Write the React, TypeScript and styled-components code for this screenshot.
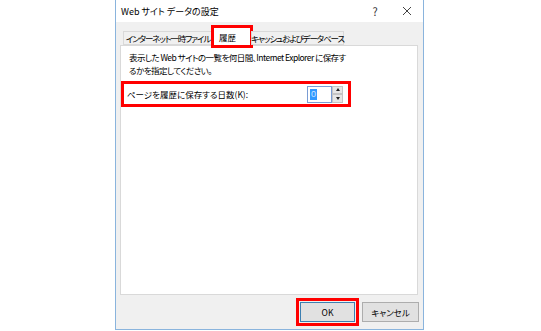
import React from "react";
import styled, { createGlobalStyle } from "styled-components";

const Global = createGlobalStyle`
  html, body { margin: 0; padding: 0; background: #ffffff; }
  body {
    font-family: "Noto Sans CJK JP", "Noto Sans", sans-serif;
    font-size: 9px;
    color: #000;
    font-feature-settings: "palt";
  }
`;

const Page = styled.div`
  width: 541px;
  height: 331px;
  display: flex;
  justify-content: flex-start;
  padding-left: 115px;
  box-sizing: border-box;
`;

const Dialog = styled.div`
  width: 309px;
  height: 330px;
  box-sizing: border-box;
  border: 1px solid #8ab4dd;
  border-top: none;
  background: #f0f0f0;
  display: flex;
  flex-direction: column;
`;

const TitleBar = styled.div`
  height: 22px;
  background: #ffffff;
  display: flex;
  align-items: center;
  padding-left: 5px;
  font-size: 9px;
`;

const TitleText = styled.div`
  flex: 1;
`;

const TitleButton = styled.div`
  width: 32px;
  text-align: center;
  font-size: 11px;
  color: #333;
  display: flex;
  align-items: center;
  justify-content: center;
`;

const Body = styled.div`
  flex: 1;
  display: flex;
  flex-direction: column;
  padding: 4px 4px 0 4px;
`;

const TabStrip = styled.div`
  display: flex;
  align-items: flex-end;
  height: 19px;
  padding-left: 3px;
  position: relative;
  z-index: 1;
`;

const Tab = styled.div<{ $active?: boolean; $w: number }>`
  width: ${(p) => p.$w}px;
  height: ${(p) => (p.$active ? 19 : 14)}px;
  box-sizing: border-box;
  border: 1px solid #d9d9d9;
  border-bottom: ${(p) => (p.$active ? "none" : "1px solid #d9d9d9")};
  background: ${(p) => (p.$active ? "#ffffff" : "#f0f0f0")};
  display: flex;
  align-items: center;
  justify-content: ${(p) => (p.$active ? "flex-start" : "center")};
  padding-left: ${(p) => (p.$active ? 5 : 0)}px;
  font-size: 8.5px;
  letter-spacing: ${(p) => (p.$active ? 0 : -1.1)}px;
  white-space: nowrap;
  outline: ${(p) => (p.$active ? "3px solid #ff0000" : "none")};
  outline-offset: ${(p) => (p.$active ? "-1px" : "0")};
  margin-bottom: ${(p) => (p.$active ? -1 : 0)}px;
`;

const Panel = styled.div`
  height: 250px;
  box-sizing: border-box;
  background: #ffffff;
  border: 1px solid #d9d9d9;
  padding: 5px 0 0 3px;
  margin-right: 1px;
`;

const Desc = styled.div`
  font-size: 8.5px;
  line-height: 13px;
  letter-spacing: -0.55px;
  padding-left: 5px;
  white-space: nowrap;
`;

const FieldRow = styled.div`
  width: 224px;
  height: 20px;
  margin-top: 7px;
  display: flex;
  align-items: center;
  outline: 3px solid #ff0000;
  padding: 0 5px 0 3px;
  box-sizing: border-box;
`;

const FieldLabel = styled.div`
  flex: 1;
  font-size: 8.5px;
`;

const SpinInput = styled.div`
  width: 25px;
  height: 17px;
  box-sizing: border-box;
  border: 1px solid #7a9cd3;
  background: #fff;
  display: flex;
  align-items: center;
  padding-left: 2px;
`;

const Selected = styled.span`
  background: #3399ff;
  color: #cfe6ff;
  font-size: 9px;
  line-height: 11px;
  padding: 0 1px;
  font-family: "Liberation Sans", sans-serif;
`;

const SpinButtons = styled.div`
  width: 11px;
  height: 17px;
  display: flex;
  flex-direction: column;
`;

const SpinButton = styled.div`
  flex: 1;
  background: #e6e6e6;
  border: 1px solid #c4c4c4;
  display: flex;
  align-items: center;
  justify-content: center;
  box-sizing: border-box;
`;

const Arrow = styled.div<{ $up?: boolean }>`
  width: 0;
  height: 0;
  border-left: 2px solid transparent;
  border-right: 2px solid transparent;
  ${(p) => (p.$up ? "border-bottom: 3px solid #222;" : "border-top: 3px solid #222;")}
`;

const ButtonRow = styled.div`
  display: flex;
  justify-content: flex-end;
  gap: 7px;
  padding: 7px 0 0 0;
`;

const Button = styled.div<{ $primary?: boolean }>`
  width: ${(p) => (p.$primary ? 55 : 57)}px;
  height: 20px;
  box-sizing: border-box;
  border: 1px solid ${(p) => (p.$primary ? "#3c7fb1" : "#adadad")};
  background: #e1e1e1;
  display: flex;
  align-items: center;
  justify-content: center;
  font-size: 8.5px;
  outline: ${(p) => (p.$primary ? "3px solid #ff0000" : "none")};
  outline-offset: 1px;
`;

export default function App() {
  return (
    <>
      <Global />
      <Page>
        <Dialog>
          <TitleBar>
            <TitleText>Web サイト データの設定</TitleText>
            <TitleButton>?</TitleButton>
            <TitleButton>
              <svg width="10" height="10" viewBox="0 0 10 10">
                <path d="M1 1L9 9M9 1L1 9" stroke="#444" strokeWidth="1" />
              </svg>
            </TitleButton>
          </TitleBar>
          <Body>
            <TabStrip>
              <Tab $w={90}>インターネット一時ファイル</Tab>
              <Tab $w={38} $active>履歴</Tab>
              <Tab $w={93}>キャッシュおよびデータベース</Tab>
            </TabStrip>
            <Panel>
              <Desc>
                表示した Web サイトの一覧を何日間、Internet Explorer に保存す
                <br />
                るかを指定してください。
              </Desc>
              <FieldRow>
                <FieldLabel>ページを履歴に保存する日数(K):</FieldLabel>
                <SpinInput>
                  <Selected>0</Selected>
                </SpinInput>
                <SpinButtons>
                  <SpinButton>
                    <Arrow $up />
                  </SpinButton>
                  <SpinButton>
                    <Arrow />
                  </SpinButton>
                </SpinButtons>
              </FieldRow>
            </Panel>
            <ButtonRow>
              <Button $primary>OK</Button>
              <Button>キャンセル</Button>
            </ButtonRow>
          </Body>
        </Dialog>
      </Page>
    </>
  );
}
